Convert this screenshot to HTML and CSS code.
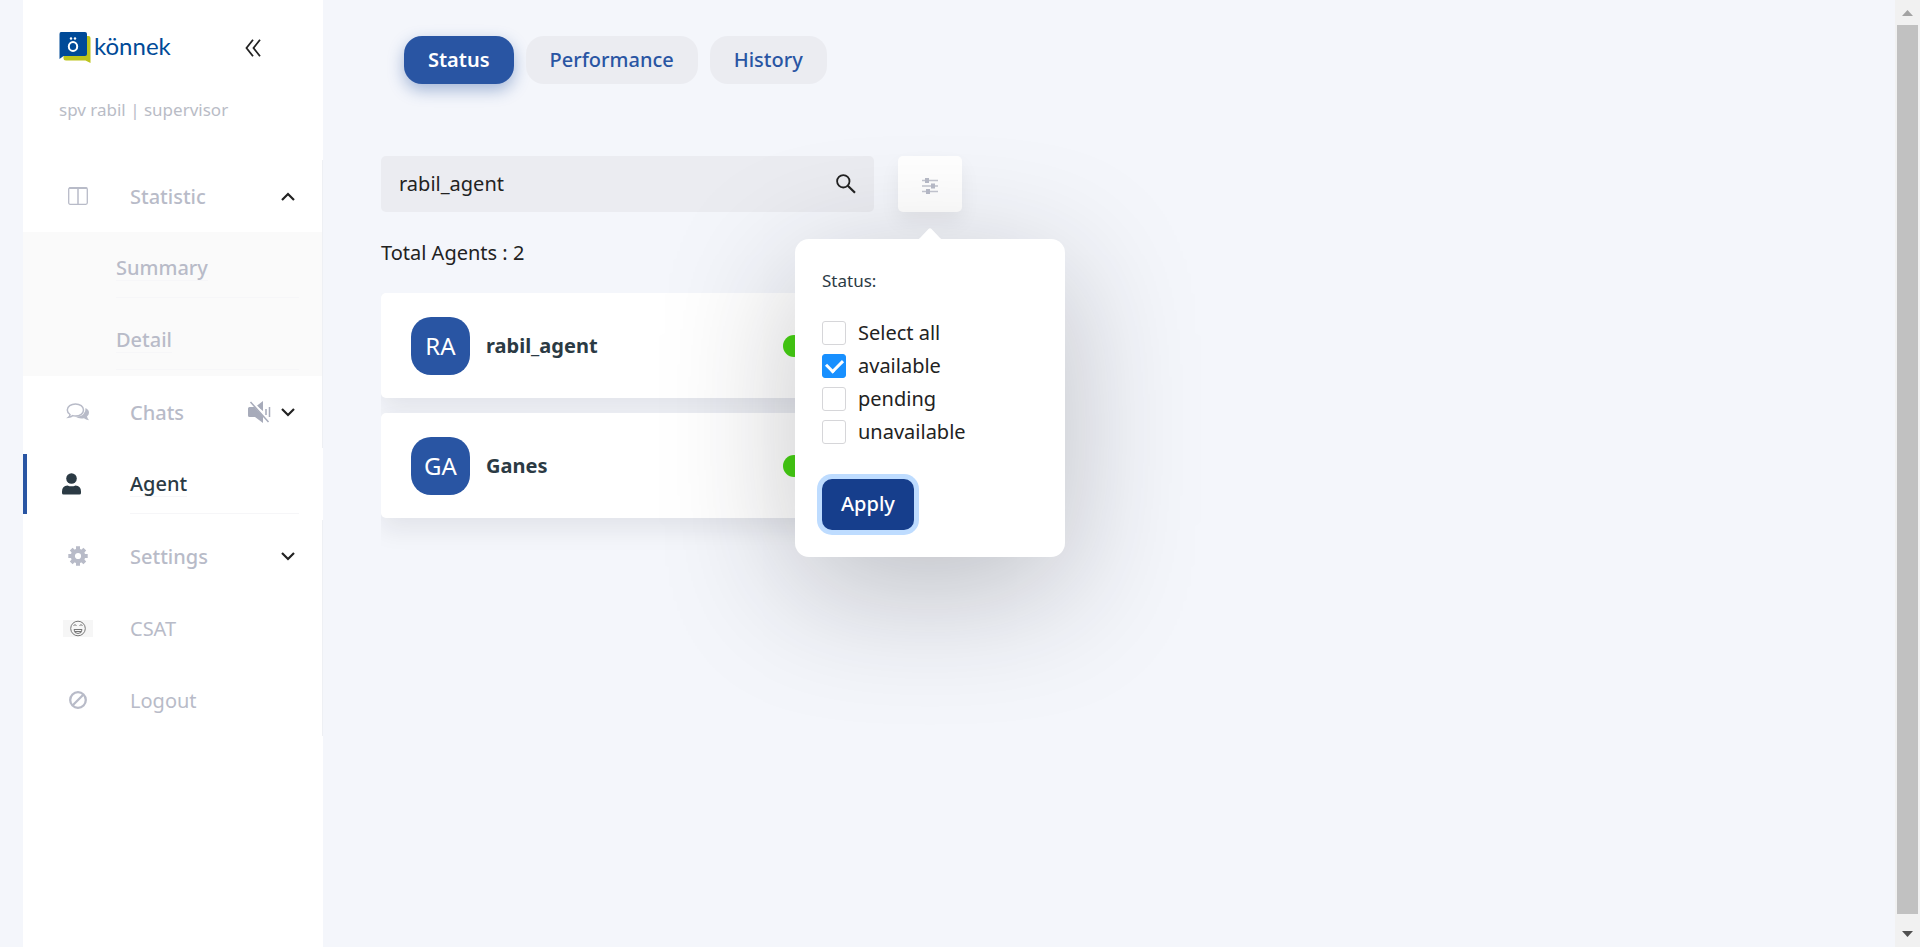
FILE: index.html
```
<!DOCTYPE html>
<html lang="en">
<head>
<meta charset="utf-8">
<title>könnek – Agent</title>
<link rel="stylesheet" href="styles.css">
</head>
<body>
<div class="app">
  <aside class="sidebar">
    <header class="brand">
      <a class="logo" href="#">
        <svg width="32" height="32" viewBox="0 0 32 32" aria-hidden="true">
          <path fill="#bdc41c" d="M7 4h22.500q2 0 2 2v25l-5-2.500H7q-2.500 0-2.500-2.500V4z"/>
          <path fill="#004a98" d="M2 0h24Q28 0 28 2v20q0 2-2 2H4.500L.5 27V2Q.5 0 2 0z"/>
          <ellipse cx="14" cy="14.500" rx="4.200" ry="4.500" fill="none" stroke="#fff" stroke-width="2"/>
          <circle cx="12" cy="6.500" r="1.200" fill="#fff"/><circle cx="16" cy="6.500" r="1.200" fill="#fff"/>
        </svg>
        <span>könnek</span>
      </a>
      <button class="collapse" type="button" aria-label="Collapse menu">
        <svg width="16" height="18" viewBox="0 0 16 18" fill="none" stroke="#222" stroke-width="1.800"><path d="M8 .8L1.500 9 8 17.200M15 .8L8.500 9l6.500 8.200"/></svg>
      </button>
    </header>
    <p class="user">spv rabil | supervisor</p>
    <nav class="menu">
      <a class="row" href="#">
        <span class="icon"><svg width="20" height="18" viewBox="0 0 20 18" fill="none" stroke="#b8bbc8"><rect x=".7" y=".7" width="18.600" height="16.600" rx="1.500" stroke-width="1.300"/><path d="M1 1.200h18" stroke-width="1.600"/><path d="M10 1v16" stroke-width="1.500"/></svg></span>
        <span class="label">Statistic</span>
        <span class="tail"><svg width="14" height="9" viewBox="0 0 14 9" fill="none" stroke="#222" stroke-width="2.200"><path d="M1 8l6-6 6 6"/></svg></span>
      </a>
      <div class="submenu">
        <a class="row" href="#"><span class="sub"><span class="label lined">Summary</span></span></a>
        <a class="row" href="#"><span class="sub"><span class="label lined">Detail</span></span></a>
      </div>
      <a class="row" href="#">
        <span class="icon"><svg width="24" height="18" viewBox="0 0 24 18"><path fill="none" stroke="#b8bbc8" stroke-width="1.500" d="M9.500 1C14 1 17.500 3.600 17.500 7s-3.500 6-8 6q-1.500 0-2.800-.4Q5 14 2.500 14.300 4 13 4 11.500 1.300 9.700 1.300 7C1.300 3.600 5 1 9.500 1z"/><path fill="#b8bbc8" d="M19.500 5q3.500 1.600 3.500 4.800 0 2-2 3.600.2 1.600 2 3.900-3.300-.3-5-2-5 1-8.500-1.500 5.500-.1 8-2.700 2.400-2.700 2-6.100z"/></svg></span>
        <span class="label">Chats</span>
        <span class="tail">
          <svg width="23" height="22" viewBox="0 0 23 22"><path fill="#a7abba" d="M0 7.500Q0 6 1.500 6H7l8 8v8l-8-6H1.500Q0 16 0 14.500zM8.500 5L15 0v10z"/><path stroke="#fff" stroke-width="3" d="M3 0l18 20"/><path stroke="#a7abba" stroke-width="1.500" d="M2.500 1l18 20M18 8v6M21.500 6v10"/></svg>
          <svg width="14" height="9" viewBox="0 0 14 9" fill="none" stroke="#222" stroke-width="2.200"><path d="M1 1l6 6 6-6"/></svg>
        </span>
      </a>
      <a class="row active" href="#">
        <span class="icon start"><svg width="19" height="22" viewBox="0 0 19 22" fill="#2b3a44"><circle cx="9.500" cy="5.500" r="5.300"/><path d="M5.500 12.500q4 1.700 8 0 5.500.3 5.500 6v1.500q0 1.500-1.500 1.500h-16Q0 21.500 0 20v-1.500q0-5.700 5.500-6z"/></svg></span>
        <span class="under"><span class="label lined">Agent</span></span>
      </a>
      <a class="row" href="#">
        <span class="icon"><svg width="20" height="20" viewBox="0 0 20 20"><circle cx="10" cy="10" r="5.200" fill="none" stroke="#b8bbc8" stroke-width="4.200"/><path stroke="#b8bbc8" stroke-width="4" d="M10 .3v4M10 15.700v4M.3 10h4M15.700 10h4M3.200 3.200L6 6M14 14l2.800 2.800M3.200 16.800L6 14M14 6l2.800-2.800"/></svg></span>
        <span class="label">Settings</span>
        <span class="tail"><svg width="14" height="9" viewBox="0 0 14 9" fill="none" stroke="#222" stroke-width="2.200"><path d="M1 1l6 6 6-6"/></svg></span>
      </a>
      <a class="row" href="#">
        <span class="icon"><svg width="30" height="17" viewBox="0 0 30 17"><path fill="#f6f6f6" d="M0 0h30v17H0z"/><g fill="none" stroke="#777"><circle cx="15" cy="8.500" r="7.300"/><path d="M11 9.500h8q0 4-4 4t-4-4zM12 11.500h6M10.500 5.500q1.500-1.500 3 0M16.500 5.500q1.500-1.500 3 0"/></g></svg></span>
        <span class="label plain">CSAT</span>
      </a>
      <a class="row" href="#">
        <span class="icon"><svg width="18" height="18" viewBox="0 0 18 18" fill="none" stroke="#b8bbc8" stroke-width="2.300"><circle cx="9" cy="9" r="7.800"/><path d="M3.500 14.500l11-11"/></svg></span>
        <span class="label plain">Logout</span>
      </a>
    </nav>
  </aside>

  <main class="content">
    <div class="tabs">
      <button class="tab selected" type="button">Status</button>
      <button class="tab" type="button">Performance</button>
      <button class="tab" type="button">History</button>
    </div>

    <div class="toolbar">
      <div class="search">
        <input type="text" value="rabil_agent" aria-label="Search agent">
        <button type="button" aria-label="Search">
          <svg width="20" height="20" viewBox="0 0 20 20" fill="none" stroke="#222" stroke-width="1.800"><circle cx="7.300" cy="7.300" r="6.200"/><path d="M11.800 11.800l7.200 7" stroke-width="2.200"/></svg>
        </button>
      </div>
      <div class="filter">
        <button class="filter-button" type="button" aria-label="Filter">
          <svg width="16" height="16" viewBox="0 0 16 16"><path stroke="#c4c6d0" stroke-width="1.600" d="M0 2.500h16M0 8h16M0 13.500h16"/><path fill="#b8bbc8" d="M3 0h4v5H3zM9 5.500h4v5H9zM4 11h4v5H4z"/></svg>
        </button>
        <form class="popover">
          <svg class="arrow" width="28" height="12" viewBox="0 0 28 12"><path fill="#fff" d="M0 12q2 0 4-2l8.500-9q1.500-1.400 3 0l8.500 9q2 2 4 2z"/></svg>
          <h2>Status:</h2>
          <label><input type="checkbox">Select all</label>
          <label><input type="checkbox" checked>available</label>
          <label><input type="checkbox">pending</label>
          <label><input type="checkbox">unavailable</label>
          <button class="apply" type="button">Apply</button>
        </form>
      </div>
    </div>

    <p class="total">Total Agents : 2</p>
    <ul class="agents">
      <li class="card"><span class="avatar">RA</span><strong>rabil_agent</strong><i class="dot"></i></li>
      <li class="card"><span class="avatar">GA</span><strong>Ganes</strong><i class="dot"></i></li>
    </ul>
  </main>

  <div class="scrollbar" aria-hidden="true">
    <svg width="11" height="6" viewBox="0 0 11 6"><path fill="#a3a3a3" d="M0 6l5.500-6L11 6z"/></svg>
    <div class="thumb"></div>
    <svg width="11" height="6" viewBox="0 0 11 6"><path fill="#505050" d="M0 0h11L5.500 6z"/></svg>
  </div>
</div>
</body>
</html>
```
FILE: styles.css
```
* { box-sizing: border-box; }
body {
  margin: 0;
  background: #f4f6fb;
  color: #222;
  font: 20px/30px "Noto Sans", sans-serif;
}
button, input { font: inherit; color: inherit; }
button { border: 0; padding: 0; background: none; cursor: pointer; }
p, h2, ul { margin: 0; padding: 0; }
a { color: inherit; text-decoration: none; }
svg { display: block; flex: none; }

.app { display: flex; min-height: 100vh; padding-left: 23px; overflow: hidden; }

.sidebar { flex: none; width: 300px; background: #fff; }
.brand { display: flex; align-items: center; justify-content: space-between; padding: 32px 62px 0 36px; }
.logo { display: flex; align-items: center; gap: 3px; color: #004a98; font: 24px/28px Lato, sans-serif; }
.logo span { padding-bottom: 4px; }
.user { padding: 31px 36px 0; color: #b9bcc6; font-size: 17px; }
.menu { padding-top: 35px; }

.row {
  display: grid;
  grid-template-columns: 32px 1fr auto;
  column-gap: 36px;
  align-items: center;
  height: 72px;
  padding: 0 27px 0 39px;
  border-right: 1px solid #eef0f4;
  color: #b8bbc8;
}
.label { padding-top: 1px; font-weight: 500; line-height: 24px; }
.plain { font-weight: 400; }
.lined { border-bottom: 1px solid #f6f6f8; }
.icon { display: flex; justify-content: center; }
.start { justify-content: flex-start; }
.tail { display: flex; align-items: center; gap: 10px; }
.submenu { background: #fafafa; }
.submenu .row { grid-template-columns: 1fr; padding-left: 93px; padding-right: 23px; }
.sub, .under { display: flex; align-items: center; height: 60px; border-bottom: 1px solid #f6f6f8; }
.under { grid-column: 2 / 4; }
.active {
  height: 60px;
  margin: 6px 0;
  padding-left: 35px;
  padding-right: 24px;
  border-left: 4px solid #2955a3;
  border-right: 0;
  color: #2b3a44;
}

.content { flex: 1; min-width: 0; padding: 36px 58px; }
.tabs { display: flex; gap: 12px; padding-left: 23px; }
.tab { padding: 9px 24px; border-radius: 18px; background: #ebecf1; color: #2955a3; font-weight: 500; }
.selected { background: #2955a3; color: #fff; font-weight: 600; box-shadow: 0 6px 16px rgba(41, 85, 163, .4); }

.toolbar { display: flex; gap: 24px; margin-top: 72px; }
.search { display: flex; align-items: center; width: 493px; height: 56px; padding: 0 18px; border-radius: 5px; background: #ebecf1; }
.search input { flex: 1; min-width: 0; padding: 0; border: 0; outline: 0; background: none; }
.filter { position: relative; }
.filter-button { display: grid; place-items: center; width: 64px; height: 56px; padding-top: 4px; border-radius: 5px; background: #fff; box-shadow: 0 10px 20px rgba(0, 0, 0, .06); }

.popover {
  position: absolute;
  z-index: 2;
  top: 83px;
  left: -103px;
  width: 270px;
  padding: 27px;
  border-radius: 14px;
  background: #fff;
  box-shadow: 0 32px 130px rgba(30, 30, 40, .26);
}
.arrow { position: absolute; top: -11px; left: 121px; }
.popover h2 { margin-bottom: 20px; color: #2b3a44; font-size: 17px; font-weight: 400; }
.popover label { display: flex; align-items: center; gap: 12px; height: 33px; }
.popover input {
  appearance: none;
  flex: none;
  width: 24px;
  height: 24px;
  margin: 0;
  border: 1px solid #d6d6d9;
  border-radius: 3px;
  background: #fff;
  display: grid;
  place-items: center;
}
.popover input:checked { border-color: #1890ff; background: #1890ff; }
.popover input:checked::after {
  content: "";
  width: 8px;
  height: 13px;
  margin-bottom: 3px;
  border: solid #fff;
  border-width: 0 3px 3px 0;
  transform: rotate(45deg);
}
.apply { margin-top: 31px; padding: 10px 19px 11px; border-radius: 10px; background: #163e8c; color: #fff; font-weight: 500; box-shadow: 0 0 0 5px #bedcff; }

.total { margin-top: 26px; }
.agents { display: grid; gap: 15px; width: 493px; margin-top: 25px; padding-bottom: 60px; overflow: hidden; list-style: none; }
.card { display: flex; align-items: center; gap: 16px; height: 105px; padding: 0 69px 0 30px; border-radius: 5px; background: #fff; box-shadow: 0 12px 24px rgba(30, 30, 40, .08); }
.avatar { display: grid; place-items: center; width: 59px; height: 58px; border-radius: 20px; background: #2955a3; color: #fff; font-size: 24px; }
.card strong { flex: 1; color: #2b3a44; font-weight: 700; }
.dot { width: 22px; height: 22px; border-radius: 50%; background: #45d410; }

.scrollbar { flex: none; display: flex; flex-direction: column; align-items: center; gap: 9px; width: 25px; padding: 10px 2px; background: #f1f1f1; }
.thumb { flex: 1; align-self: stretch; margin-bottom: 8px; background: #c1c1c1; }
```
